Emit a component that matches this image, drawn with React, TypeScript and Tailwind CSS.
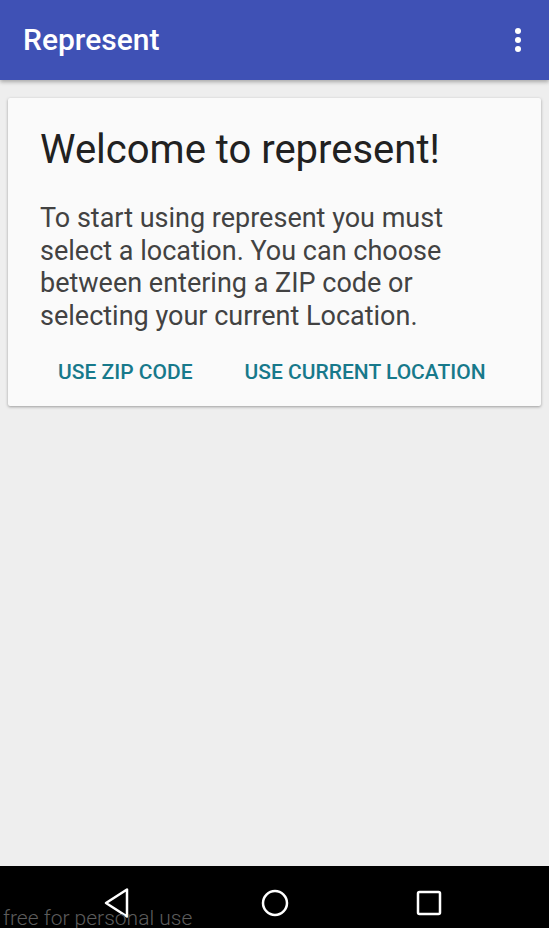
function AppBar() {
  return (
    <header className="relative z-10 flex h-[80px] shrink-0 items-center justify-between bg-[#3f51b5] pl-[23px] pr-[16px] shadow-[0_2px_4px_rgba(0,0,0,0.3)]">
      <h1 className="text-[30px] font-medium leading-none text-white">Represent</h1>
      <svg width="20" height="28" viewBox="0 0 20 28" className="mr-[5px]">
        <circle cx="10" cy="5" r="3" fill="white" />
        <circle cx="10" cy="14" r="3" fill="white" />
        <circle cx="10" cy="23" r="3" fill="white" />
      </svg>
    </header>
  );
}

function WelcomeCard() {
  return (
    <div className="mx-[8px] mt-[18px] rounded-[2px] bg-[#fafafa] pb-[23px] pl-[32px] pr-[28px] pt-[26px] shadow-[0_1px_3px_rgba(0,0,0,0.35)]">
      <h2 className="text-[40px] font-normal leading-[52px] text-[#212121]">Welcome to represent!</h2>
      <p className="mt-[26px] text-[27px] leading-[32.7px] text-[#424242]">
        To start using represent you must select a location. You can choose between entering a ZIP code or selecting your current Location.
      </p>
      <div className="mt-[29px] flex items-center gap-[52px] pl-[18px]">
        <button className="text-[21px] font-medium leading-none text-[#17798b]">USE ZIP CODE</button>
        <button className="text-[21px] font-medium leading-none text-[#17798b]">USE CURRENT LOCATION</button>
      </div>
    </div>
  );
}

function NavBar() {
  return (
    <nav className="relative flex h-[62px] shrink-0 items-center bg-black pt-[12px]">
      <div className="flex items-center pl-[101px]">
        <svg width="30" height="32" viewBox="0 0 30 32">
          <path d="M5 16 L26 2.5 L26 29.5 Z" fill="none" stroke="white" strokeWidth="2.5" strokeLinejoin="round" />
        </svg>
        <svg width="30" height="30" viewBox="0 0 30 30" className="ml-[129px]">
          <circle cx="15" cy="15" r="12" fill="none" stroke="white" strokeWidth="2.5" />
        </svg>
        <svg width="30" height="30" viewBox="0 0 30 30" className="ml-[124px]">
          <rect x="4" y="4" width="22" height="22" rx="1.5" fill="none" stroke="white" strokeWidth="2.5" />
        </svg>
      </div>
      <span className="absolute left-[3px] top-[42px] text-[21px] font-light leading-none text-[#5c5c5c]">
        free for personal use
      </span>
    </nav>
  );
}

export default function App() {
  return (
    <div className="flex h-[928px] w-full flex-col overflow-hidden bg-[#eeeeee] font-['Roboto',sans-serif]">
      <AppBar />
      <main className="flex-1">
        <WelcomeCard />
      </main>
      <NavBar />
    </div>
  );
}
